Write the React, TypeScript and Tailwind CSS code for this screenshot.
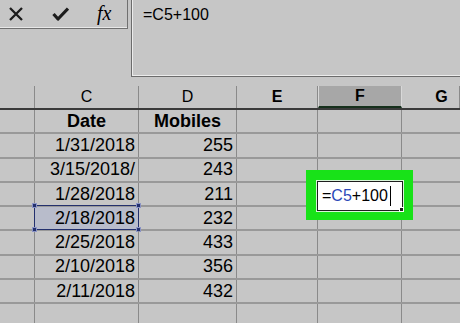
import React from 'react';

const cols = [
    { key: 'B', w: 'w-[35px]' },
    { key: 'C', w: 'w-[104px]' },
    { key: 'D', w: 'w-[98px]' },
    { key: 'E', w: 'w-[81px]' },
    { key: 'F', w: 'w-[84px]' },
    { key: 'G', w: 'flex-1' },
];

const rows: [string, string][] = [
    ['Date', 'Mobiles'],
    ['1/31/2018', '255'],
    ['3/15/2018/', '243'],
    ['1/28/2018', '211'],
    ['2/18/2018', '232'],
    ['2/25/2018', '433'],
    ['2/10/2018', '356'],
    ['2/11/2018', '432'],
    ['', ''],
];

const Handle = ({ pos }: { pos: string }) => (
    <span className={`absolute w-[5px] h-[5px] bg-[#23306e] border border-[#8a93c4] ${pos}`} />
);

export default function App() {
    return (
        <div className="relative w-[460px] h-[323px] overflow-hidden bg-[#c6c6c6] text-black" style={{ fontFamily: '"Liberation Sans", Arial, sans-serif' }}>
            {/* formula bar */}
            <div className="flex h-[77px]">
                <div className="w-[131px]">
                    <div className="h-[29px] w-[128px] border-b border-r border-[#707070] shadow-[inset_0_-1px_0_#e8e8e8] flex items-center">
                        <svg width="16" height="16" viewBox="0 0 16 16" className="ml-[8px]">
                            <path d="M2 2 L14 14 M14 2 L2 14" stroke="#1c1c1c" strokeWidth="2.3" />
                        </svg>
                        <svg width="17" height="14" viewBox="0 0 17 14" className="ml-[28px]">
                            <path d="M1.5 7 L6 12 L16 1.5" stroke="#1c1c1c" strokeWidth="3.2" fill="none" strokeLinejoin="round" />
                        </svg>
                        <span className="ml-[28px] -mt-[2px] text-[20px] italic" style={{ fontFamily: '"Liberation Serif", "Times New Roman", serif' }}>fx</span>
                    </div>
                </div>
                <div className="flex-1 border-l border-b border-[#6c6c6c] shadow-[inset_1px_-1px_0_#ececec] pl-[11px] pt-[5px] text-[16px] leading-[20px]">
                    =C5+100
                </div>
            </div>
            <div className="h-[9px]" />
            {/* column headers */}
            <div className="flex h-[24px] border-b-2 border-[#3a3a3a]">
                {cols.map((c) => (
                    <div
                        key={c.key}
                        className={`${c.w} h-full flex items-center justify-center text-[16px] border-r-[1.5px] border-[#8a8a8a] ${c.key === 'F' ? 'bg-[#a7a7a7] border-[#d8d8d8] border-l border-r border-b-2 border-b-[#16301c] -mb-[2px] h-[24px] font-bold' : ''} ${c.key === 'E' || c.key === 'G' ? 'font-bold' : ''} ${c.key === 'G' ? 'border-r-0 pl-[22px]' : ''}`}
                    >
                        {c.key === 'B' ? '' : c.key}
                    </div>
                ))}
            </div>
            {/* data rows */}
            {rows.map((r, i) => (
                <div key={i} className="flex h-[24.3px] border-b-2 border-[#999999]">
                    <div className="w-[35px] border-r-[1.5px] border-[#8a8a8a]" />
                    <div className={`relative w-[104px] border-r-[1.5px] border-[#8a8a8a] flex items-center text-[18px] ${i === 0 ? 'justify-center font-bold' : 'justify-end pr-[3px]'} ${i === 4 ? 'bg-[#b8bccb]' : ''}`}>
                        {r[0]}
                        {i === 4 && (
                            <div className="absolute -left-[1px] -top-[2px] -right-[1px] -bottom-[1px] border-[1.5px] border-[#23306e]">
                                <Handle pos="-left-[3px] -top-[3px]" />
                                <Handle pos="-right-[3px] -top-[3px]" />
                                <Handle pos="-left-[3px] -bottom-[3px]" />
                                <Handle pos="-right-[3px] -bottom-[3px]" />
                            </div>
                        )}
                    </div>
                    <div className={`w-[98px] border-r-[1.5px] border-[#8a8a8a] flex items-center text-[18px] ${i === 0 ? 'justify-center font-bold' : 'justify-end pr-[3px]'}`}>
                        {r[1]}
                    </div>
                    <div className="w-[81px] border-r-[1.5px] border-[#8a8a8a]" />
                    <div className="w-[84px] border-r-[1.5px] border-[#8a8a8a]" />
                    <div className="flex-1" />
                </div>
            ))}
            {/* editing cell highlight */}
            <div className="absolute left-[306px] top-[170px] w-[107px] h-[50px] bg-[#18e218]" />
            <div className="absolute left-[316px] top-[180px] w-[88px] h-[32px] border border-[#d7f5d7]" />
            <div className="absolute left-[317px] top-[181px] w-[86px] h-[30px] bg-white border-[1.5px] border-[#1e1e1e] flex items-center pl-[4px] text-[16px]">
                <span>=</span>
                <span className="text-[#2b48b8]">C5</span>
                <span>+100</span>
                <span className="ml-[2px] w-[1.5px] h-[20px] bg-black" />
                <span className="absolute right-[-2px] bottom-[-2px] w-[5px] h-[5px] bg-[#1e1e1e] border border-white" />
            </div>
        </div>
    );
}
